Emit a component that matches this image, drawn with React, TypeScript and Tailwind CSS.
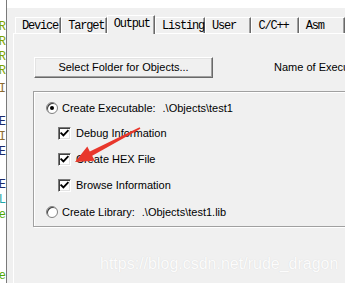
import React from "react";

function Frag({ c, color }: { c: string; color: string }) {
  return (
    <div className={`h-[15px] w-[6px] overflow-hidden flex justify-end items-center ${color}`}>
      <span className="whitespace-nowrap">{c}</span>
    </div>
  );
}

function Check() {
  return (
    <div className="w-[13px] h-[13px] shrink-0 bg-white border-t border-l border-b border-r border-t-[#7a7a7a] border-l-[#7a7a7a] border-b-white border-r-white shadow-[inset_1px_1px_0_#404040,inset_-1px_-1px_0_#e3e3e3] flex items-center justify-center">
      <svg width="11" height="11" viewBox="0 0 11 11">
        <path d="M2.2 5.2 L4.4 7.4 L8.8 2.8" fill="none" stroke="#000" strokeWidth="1.8" strokeLinecap="square" />
      </svg>
    </div>
  );
}

function Radio({ on }: { on?: boolean }) {
  return (
    <div className="w-[12px] h-[12px] shrink-0 rounded-full bg-white border border-[#808080] shadow-[inset_1px_1px_0_#404040] flex items-center justify-center">
      {on ? <div className="w-[4px] h-[4px] rounded-full bg-black" /> : null}
    </div>
  );
}

function Tab({ label, w, sel }: { label: string; w: string; sel?: boolean }) {
  if (sel) {
    return (
      <div
        className={`${w} h-[19px] -mb-px relative z-10 bg-[#f0f0f0] border-t border-l border-white border-r border-r-[#696969] shadow-[inset_-1px_0_0_#a0a0a0] pl-[6px] pt-[1px] leading-[15px]`}
      >
        {label}
      </div>
    );
  }
  return (
    <div
      className={`${w} h-[16px] bg-[#f0f0f0] border-t border-l border-white border-r border-r-[#696969] shadow-[inset_-1px_0_0_#a0a0a0] pl-[6px] leading-[16px]`}
    >
      {label}
    </div>
  );
}

export default function App() {
  return (
    <div className="w-[345px] h-[283px] overflow-hidden relative flex bg-white text-black font-['Liberation_Sans',Arial,sans-serif] text-[11px]">
      {/* left strip of editor behind */}
      <div className="w-[6px] shrink-0 bg-white flex flex-col text-[12px] font-['Liberation_Mono',monospace]">
        <div className="h-[20px]" />
        <Frag c="R" color="text-[#7da400]" />
        <Frag c="R" color="text-[#7da400]" />
        <Frag c="R" color="text-[#7da400]" />
        <Frag c="R" color="text-[#7da400]" />
        <div className="h-[3px]" />
        <Frag c="I" color="text-[#8a6a30]" />
        <div className="h-[19px]" />
        <Frag c="E" color="text-[#1a2a6a]" />
        <Frag c="I" color="text-[#8a6a30]" />
        <Frag c="E" color="text-[#1a2a6a]" />
        <div className="h-[19px]" />
        <Frag c="E" color="text-[#1a2a6a]" />
        <Frag c="L" color="text-[#20a8a8]" />
        <Frag c="e" color="text-[#50a800]" />
        <div className="h-[47px]" />
        <Frag c="e" color="text-[#50a800]" />
      </div>
      <div className="w-px shrink-0 bg-[#7a7a7a]" />
      <div className="flex-1 flex flex-col bg-[#f0f0f0] min-w-0">
        <div className="h-[8px] bg-white shrink-0" />
        {/* tabs */}
        <div className="h-[25px] shrink-0 pl-[8px] flex items-end font-['Liberation_Mono',monospace] text-[12px] tracking-[-1.2px] whitespace-nowrap">
          <Tab label="Device" w="w-[48px]" />
          <Tab label="Target" w="w-[47px]" />
          <Tab label="Output" w="w-[50px]" sel />
          <Tab label="Listing" w="w-[52px]" />
          <Tab label="User" w="w-[48px]" />
          <Tab label="C/C++" w="w-[49px]" />
          <Tab label="Asm" w="w-[48px]" />
        </div>
        {/* panel */}
        <div className="flex-1 ml-[6px] border-t border-l border-white pl-[20px] pt-[23px] flex flex-col whitespace-nowrap">
          <div className="flex items-center h-[21px]">
            <div className="w-[179px] h-[21px] shrink-0 flex items-center justify-center bg-[#f0f0f0] border border-t-white border-l-white border-b-[#696969] border-r-[#696969] shadow-[inset_-1px_-1px_0_#a0a0a0,inset_1px_1px_0_#e3e3e3]">
              Select Folder for Objects...
            </div>
            <span className="ml-[61px]">Name of Executable:</span>
          </div>
          <div className="mt-[13px] -ml-px w-[400px] border border-[#a0a0a0] shadow-[inset_1px_1px_0_#fff,1px_1px_0_#fff] pt-[3px] pb-[1px] flex flex-col">
            <div className="h-[26px] pl-[12px] flex items-center">
              <Radio on />
              <span className="ml-[4px]">Create Executable:</span>
              <span className="ml-[7px]">.\Objects\test1</span>
            </div>
            <div className="h-[25px] pl-[24px] flex items-center">
              <Check />
              <span className="ml-[5px]">Debug Information</span>
            </div>
            <div className="h-[26px] pl-[24px] flex items-center">
              <Check />
              <span className="ml-[5px]">Create HEX File</span>
            </div>
            <div className="h-[27px] pl-[24px] flex items-center">
              <Check />
              <span className="ml-[5px]">Browse Information</span>
            </div>
            <div className="h-[26px] pl-[12px] flex items-center">
              <Radio />
              <span className="ml-[4px]">Create Library:</span>
              <span className="ml-[7px]">.\Objects\test1.lib</span>
            </div>
          </div>
        </div>
      </div>
      {/* watermark */}
      <div className="absolute left-[100px] top-[254px] text-[16px] leading-[20px] text-[#fcfcfc] [text-shadow:0_0_1px_#d4d4d4] whitespace-nowrap font-['Liberation_Sans',Arial,sans-serif]">
        https://blog.csdn.net/rude_dragon
      </div>
      {/* red arrow annotation */}
      <svg className="absolute left-0 top-0" width="345" height="283" viewBox="0 0 345 283">
        <polygon
          points="75,162 87.3,146.5 89.8,151.4 139.6,127.3 140.4,128.7 92.2,155.8 94.7,160.7"
          fill="#e8372c"
        />
      </svg>
    </div>
  );
}
